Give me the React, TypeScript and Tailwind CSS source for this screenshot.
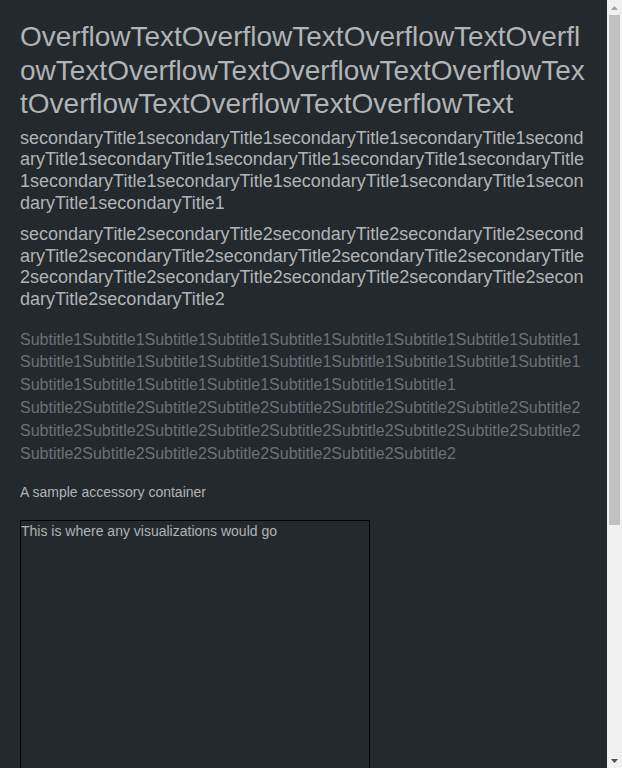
const title = "OverflowText".repeat(10);
const secondary1 = "secondaryTitle1".repeat(15);
const secondary2 = "secondaryTitle2".repeat(15);
const subtitle1 = "Subtitle1".repeat(25);
const subtitle2 = "Subtitle2".repeat(25);

function Scrollbar() {
  return (
    <div className="flex h-full w-[15px] shrink-0 flex-col bg-[#f1f1f1]">
      <div className="flex h-[15px] items-center justify-center">
        <svg width="7" height="4" viewBox="0 0 7 4" aria-hidden>
          <path d="M3.5 0L7 4H0z" fill="#a3a3a3" />
        </svg>
      </div>
      <div className="mx-auto h-[510px] w-[11px] bg-[#c1c1c1]" />
      <div className="flex-1" />
      <div className="flex h-[15px] items-center justify-center">
        <svg width="7" height="4" viewBox="0 0 7 4" aria-hidden>
          <path d="M0 0H7L3.5 4z" fill="#505050" />
        </svg>
      </div>
    </div>
  );
}

export default function App() {
  return (
    <div className="flex h-screen overflow-hidden bg-[#24292d] font-['Liberation_Sans',Arial,sans-serif] text-[#b1b4b6]">
      <main className="min-w-0 flex-1 px-5 pt-5">
        <h1 className="break-all text-[28px] leading-[33.6px]">{title}</h1>

        <h2 className="mt-[7px] break-all text-[18px] leading-[21.6px]">{secondary1}</h2>
        <h2 className="mt-[10px] break-all text-[18px] leading-[21.6px]">{secondary2}</h2>

        <div className="mt-[18px] text-[16px] leading-[22.8px] text-[#6b7176]">
          <p className="break-all">{subtitle1}</p>
          <p className="break-all">{subtitle2}</p>
        </div>

        <p className="mt-[17px] text-[14px] leading-5">A sample accessory container</p>

        <div className="mt-[18px] h-[1093px] w-[350px] border border-black text-[14px] leading-5">
          This is where any visualizations would go
        </div>
      </main>
      <Scrollbar />
    </div>
  );
}
